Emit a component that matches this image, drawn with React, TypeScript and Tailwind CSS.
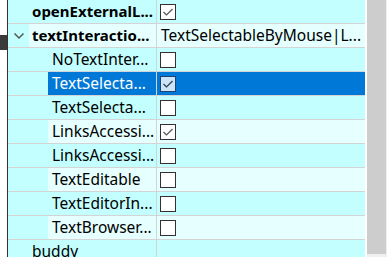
import React from "react";

type Row = {
  name: string;
  bold?: boolean;
  child?: boolean;
  expander?: boolean;
  value?: string;
  check?: boolean | null;
  selected?: boolean;
};

const rows: Row[] = [
  { name: "openExternalL...", bold: true, check: true },
  { name: "textInteractio...", bold: true, expander: true, value: "TextSelectableByMouse|L..." },
  { name: "NoTextInter...", child: true, check: false },
  { name: "TextSelecta...", child: true, check: true, selected: true },
  { name: "TextSelecta...", child: true, check: false },
  { name: "LinksAccessi...", child: true, check: true },
  { name: "LinksAccessi...", child: true, check: false },
  { name: "TextEditable", child: true, check: false },
  { name: "TextEditorIn...", child: true, check: false },
  { name: "TextBrowser...", child: true, check: false },
  { name: "buddy" },
];

function CheckBox({ checked, selected }: { checked: boolean; selected?: boolean }) {
  return (
    <div
      className={
        "w-[16px] h-[16px] border flex items-center justify-center " +
        (selected ? "bg-[#cce4f7] border-[#1c4470]" : "bg-white border-[#333333]")
      }
    >
      {checked && (
        <svg width="14" height="14" viewBox="0 0 14 14">
          <polyline
            points="2.5,7 5.5,10 11.5,4"
            fill="none"
            stroke={selected ? "#2b3a4a" : "#555555"}
            strokeWidth="1.2"
          />
        </svg>
      )}
    </div>
  );
}

export default function App() {
  return (
    <div
      className="w-[387px] h-[257px] flex bg-white overflow-hidden text-[15.5px] text-black"
      style={{ fontFamily: '"Noto Sans", "Open Sans", sans-serif' }}
    >
      {/* left strip */}
      <div className="w-[7px] flex flex-col">
        <div className="h-[35px]" />
        <div className="h-[15px] bg-[#3a3a3a]" />
      </div>
      <div className="w-px bg-[#333333]" />

      {/* property tree */}
      <div className="w-[357px] flex flex-col">
        {rows.map((r, i) => {
          const dark = i % 2 === 0;
          const bg = dark ? "bg-[#c4ffff]" : "bg-[#e6ffff]";
          return (
            <div key={i} className="flex h-[24px] shrink-0 border-b border-[#d4d4d4] bg-[#c4ffff]">
              <div className="w-[149px] flex border-r border-[#d4d4d4]">
                <div
                  className={
                    "shrink-0 flex items-center justify-center " + (r.child ? "w-[40px]" : "w-[21px]")
                  }
                >
                  {r.expander && (
                    <svg width="12" height="8" viewBox="0 0 12 8">
                      <polyline points="1.5,1.5 6,6 10.5,1.5" fill="none" stroke="#555555" strokeWidth="1.5" />
                    </svg>
                  )}
                </div>
                <div
                  className={
                    "flex-1 flex items-center whitespace-nowrap overflow-hidden leading-[23px] " +
                    (r.child ? "pl-[4px] " : "pl-[3px] ") +
                    (r.bold ? "font-bold text-[15px] " : "") +
                    (r.selected ? "bg-[#0078d7] text-white" : bg)
                  }
                >
                  {r.name}
                </div>
              </div>
              <div
                className={
                  "flex-1 flex items-center pl-[3px] whitespace-nowrap overflow-hidden leading-[23px] " +
                  (r.selected ? "bg-[#0078d7]" : bg)
                }
              >
                {r.value && <span className="pl-px">{r.value}</span>}
                {r.check !== undefined && r.check !== null && (
                  <CheckBox checked={r.check} selected={r.selected} />
                )}
              </div>
            </div>
          );
        })}
      </div>

      {/* scrollbar */}
      <div className="w-[2px]" />
      <div className="w-[19px] flex flex-col bg-[#f0f0f0]">
        <div className="h-[254px] bg-[#cdcdcd]" />
      </div>
      <div className="w-px bg-[#f0f0f0]" />
    </div>
  );
}
